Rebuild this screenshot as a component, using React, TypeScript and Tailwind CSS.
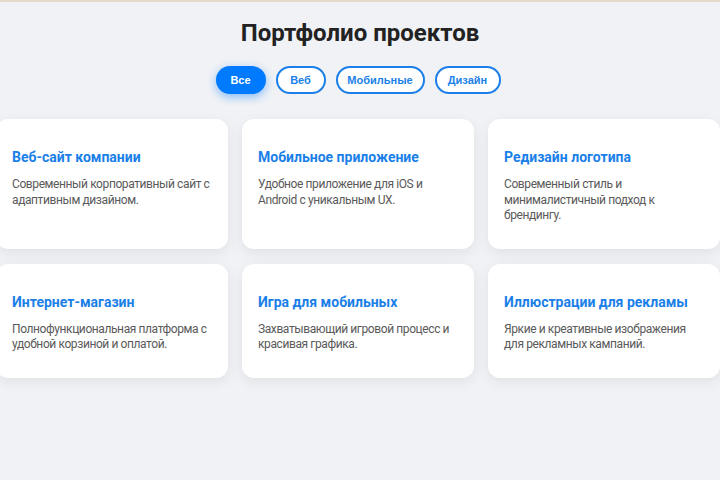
import React from "react";

const items = [
  { t: "Веб-сайт компании", d: ["Современный корпоративный сайт с", "адаптивным дизайном."] },
  { t: "Мобильное приложение", d: ["Удобное приложение для iOS и", "Android с уникальным UX."] },
  { t: "Редизайн логотипа", d: ["Современный стиль и", "минималистичный подход к", "брендингу."] },
  { t: "Интернет-магазин", d: ["Полнофункциональная платформа с", "удобной корзиной и оплатой."] },
  { t: "Игра для мобильных", d: ["Захватывающий игровой процесс и", "красивая графика."] },
  { t: "Иллюстрации для рекламы", d: ["Яркие и креативные изображения", "для рекламных кампаний."] },
];

export default function App() {
  return (
    <div className="w-[720px] h-[480px] overflow-hidden bg-[#f0f2f5] flex flex-col" style={{ fontFamily: 'Roboto, "Noto Sans", sans-serif' }}>
      <div className="h-[2px] bg-[#e4d9cb] shrink-0" />
      <h1 className="text-center text-[24px] font-bold text-[#222] mt-[16px] leading-[30px]">Портфолио проектов</h1>
      <div className="flex justify-center gap-[10px] mt-[18px] mr-[4px]" style={{ fontFamily: '"Liberation Sans", Arial, sans-serif' }}>
        <button className="h-[28px] w-[50px] rounded-full bg-[#007bff] text-white text-[11px] font-bold shadow-[0_3px_10px_rgba(0,123,255,0.45)]">Все</button>
        <button className="h-[28px] w-[50px] rounded-full bg-white border-2 border-[#1a7fe8] text-[#1a7fe8] text-[11px] font-bold">Веб</button>
        <button className="h-[28px] w-[89px] rounded-full bg-white border-2 border-[#1a7fe8] text-[#1a7fe8] text-[11px] font-bold">Мобильные</button>
        <button className="h-[28px] w-[66px] rounded-full bg-white border-2 border-[#1a7fe8] text-[#1a7fe8] text-[11px] font-bold">Дизайн</button>
      </div>
      <div className="grid grid-cols-[232px_232px_232px] gap-x-[14px] gap-y-[15px] ml-[-4px] mt-[25px]">
        {items.map((it) => (
          <div key={it.t} className="bg-white rounded-[12px] shadow-[0_4px_14px_rgba(0,0,0,0.07)] px-4 pt-[28px] pb-[25px]">
            <h3 className="text-[14px] font-bold text-[#1a7fe8] leading-[20px]">{it.t}</h3>
            <p className="mt-[10px] text-[12px] tracking-[-0.4px] text-[#5a5a5a] leading-[15.5px]">
              {it.d.map((l) => (
                <span key={l} className="block whitespace-nowrap">{l}</span>
              ))}
            </p>
          </div>
        ))}
      </div>
    </div>
  );
}
